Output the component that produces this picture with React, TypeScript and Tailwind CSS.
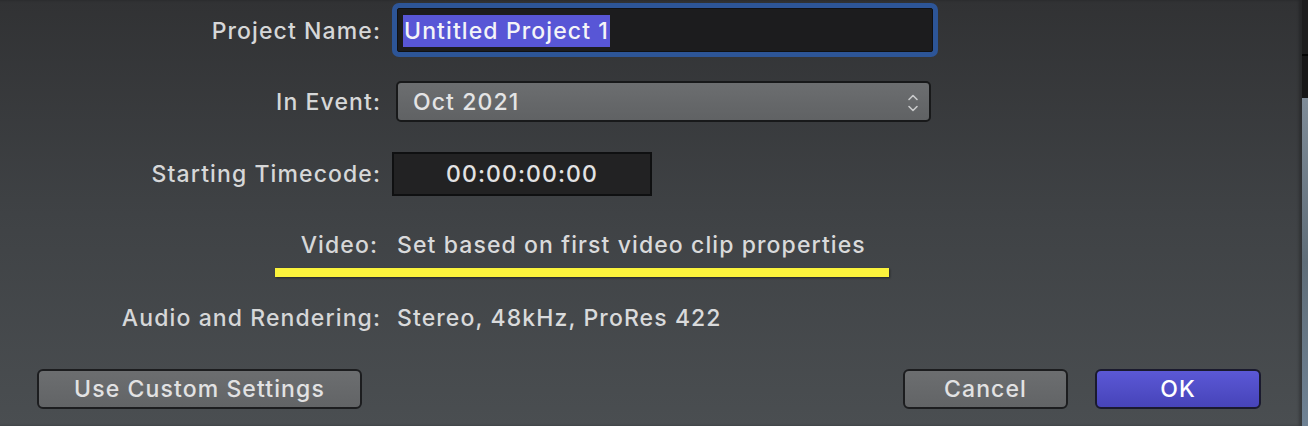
import React from "react";

function Label({ children, extra = "" }: { children: React.ReactNode; extra?: string }) {
  return (
    <div className={"w-[381px] shrink-0 text-right text-[#d6d7d8] " + extra}>
      {children}
    </div>
  );
}

function UpDown() {
  return (
    <svg width="12" height="22" viewBox="0 0 12 22" fill="none" stroke="#c9cacb" strokeWidth="1.6" strokeLinecap="round" strokeLinejoin="round">
      <path d="M2 7.5 L6 3.5 L10 7.5" />
      <path d="M2 14.5 L6 18.5 L10 14.5" />
    </svg>
  );
}

export default function App() {
  return (
    <div
      className="flex h-[426px] w-[1308px] overflow-hidden text-[23px] font-medium tracking-[1.1px]"
      style={{ fontFamily: "Inter, 'Noto Sans', sans-serif" }}
    >
      <div className="flex flex-1 flex-col bg-gradient-to-b from-[#313234] via-[#3f4245] to-[#4a4e51] shadow-[inset_-3px_0_3px_rgba(0,0,0,0.25)]">
        {/* project name */}
        <div className="mt-[3px] flex h-[54px] items-center">
          <Label extra="pt-[2px]">Project Name:</Label>
          <div className="ml-[11px] flex h-[54px] w-[546px] rounded-[7px] bg-[#2d5597] p-[5px]">
            <div className="flex flex-1 items-center rounded-[2px] border border-[#101114] bg-[#1c1c1e] px-[5px] pt-[2px]">
              <span className="bg-[#5856d6] px-[1px] leading-[32px] text-[#f4f4f8]">Untitled Project 1</span>
            </div>
          </div>
        </div>

        {/* event */}
        <div className="mt-[24px] flex h-[41px] items-center">
          <Label extra="pt-[2px]">In Event:</Label>
          <div className="ml-[15px] flex h-[41px] w-[535px] items-center justify-between rounded-[5px] border-2 border-[#18191a] bg-gradient-to-b from-[#6c6e70] to-[#606264] pl-[15px] pr-[10px] pt-[2px] text-[#e4e4e5]">
            <span>Oct 2021</span>
            <UpDown />
          </div>
        </div>

        {/* timecode */}
        <div className="mt-[30px] flex h-[44px] items-center">
          <Label>Starting Timecode:</Label>
          <div className="ml-[11px] flex h-[44px] w-[260px] items-center justify-center border-2 border-[#0f1011] bg-[#222223] text-[#e2e2e3]">
            00:00:00:00
          </div>
        </div>

        {/* video */}
        <div className="mt-[34px] flex h-[30px] items-center">
          <Label extra="pr-[3px]">Video:</Label>
          <div className="ml-[16px] text-[#d9dadb]">Set based on first video clip properties</div>
        </div>
        <div className="ml-[275px] mt-[8px] h-[9px] w-[614px] bg-[#fbf33c] shadow-[1px_1px_2px_rgba(0,0,0,0.45)]" />

        {/* audio */}
        <div className="mt-[26px] flex h-[30px] items-center">
          <Label>Audio and Rendering:</Label>
          <div className="ml-[16px] text-[#d9dadb]">Stereo, 48kHz, ProRes 422</div>
        </div>

        {/* buttons */}
        <div className="mt-[36px] flex h-[40px] items-center pl-[37px] pr-[41px]">
          <button className="h-[40px] w-[325px] rounded-[6px] border-2 border-[#1c1d1f] bg-gradient-to-b from-[#6c6e70] to-[#626466] text-[#e2e2e3]">
            Use Custom Settings
          </button>
          <div className="flex-1" />
          <button className="h-[40px] w-[165px] rounded-[6px] border-2 border-[#1c1d1f] bg-gradient-to-b from-[#6c6e70] to-[#626466] text-[#e2e2e3]">
            Cancel
          </button>
          <button className="ml-[27px] h-[40px] w-[166px] rounded-[6px] border-2 border-[#1a1a2e] bg-gradient-to-b from-[#5b58d6] to-[#4744b9] text-white">
            OK
          </button>
        </div>
      </div>

      {/* edge of the window behind */}
      <div className="flex w-[6px] flex-col">
        <div className="h-[54px] bg-[#1d1d1e]" />
        <div className="h-[2px] bg-[#050505]" />
        <div className="h-[42px] bg-[#171718]" />
        <div className="flex-1 bg-gradient-to-b from-[#7f8c98] via-[#5f6d78] to-[#6f8294]" />
      </div>
    </div>
  );
}
